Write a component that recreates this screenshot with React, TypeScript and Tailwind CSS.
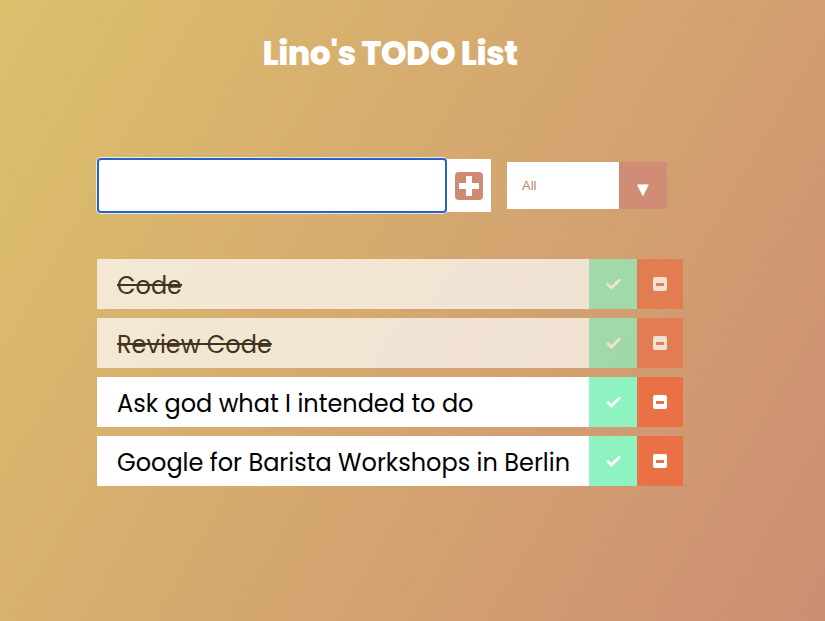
import { Check } from 'lucide-react';

type Todo = { text: string; done: boolean };

const todos: Todo[] = [
  { text: 'Code', done: true },
  { text: 'Review Code', done: true },
  { text: 'Ask god what I intended to do', done: false },
  { text: 'Google for Barista Workshops in Berlin', done: false },
];

function PlusSquare() {
  return (
    <span className="relative flex h-[28px] w-[28px] items-center justify-center rounded-[4px] bg-[#d08a73]">
      <span className="absolute h-[6px] w-[20px] bg-white" />
      <span className="absolute h-[20px] w-[6px] bg-white" />
    </span>
  );
}

function MinusSquare() {
  return (
    <span className="flex h-[14px] w-[14px] items-center justify-center rounded-[2px] bg-white">
      <span className="h-[3px] w-[8px] bg-[#ea7045]" />
    </span>
  );
}

function TodoRow({ todo }: { todo: Todo }) {
  return (
    <div className={`flex h-[50px] w-[586px] items-center bg-white ${todo.done ? 'opacity-70' : ''}`}>
      <span
        className={`flex-1 pl-[20px] pt-[3px] text-[24px] text-black ${todo.done ? 'line-through' : ''}`}
      >
        {todo.text}
      </span>
      <button className="flex h-full w-[48px] items-center justify-center bg-[#8ef2c1] text-white">
        <Check size={17} strokeWidth={4} />
      </button>
      <button className="flex h-full w-[46px] items-center justify-center bg-[#ea7045]">
        <MinusSquare />
      </button>
    </div>
  );
}

export default function App() {
  return (
    <div className="min-h-screen w-full bg-[linear-gradient(120deg,#dcc06c_0%,#cd8e73_100%)] font-['Poppins','Open_Sans',sans-serif]">
      <div className="w-[780px] pt-[32px]">
        <h1 className="text-center text-[33px] font-extrabold leading-[44px] tracking-[-0.6px] text-white">
          Lino's TODO List
        </h1>

        <div className="mt-[82px] flex h-[55px] items-center pl-[97px]">
          <div className="h-[55px] w-[350px] rounded-[4px] border-2 border-[#2563c6] bg-white ring-1 ring-white/70" />
          <button className="flex h-[53px] w-[44px] items-center justify-center bg-white">
            <PlusSquare />
          </button>
          <div className="ml-[16px] flex h-[47px] w-[160px] items-stretch bg-white">
            <span className="flex flex-1 items-center pl-[15px] font-['Liberation_Sans',sans-serif] text-[13px] text-[#c7826d]">
              All
            </span>
            <span className="flex w-[48px] items-center justify-center bg-[#d08c75] pt-[6px] text-[20px] leading-none text-white">
              ▼
            </span>
          </div>
        </div>

        <div className="mt-[46px] flex flex-col gap-[9px] pl-[97px]">
          {todos.map((todo) => (
            <TodoRow key={todo.text} todo={todo} />
          ))}
        </div>
      </div>
    </div>
  );
}
